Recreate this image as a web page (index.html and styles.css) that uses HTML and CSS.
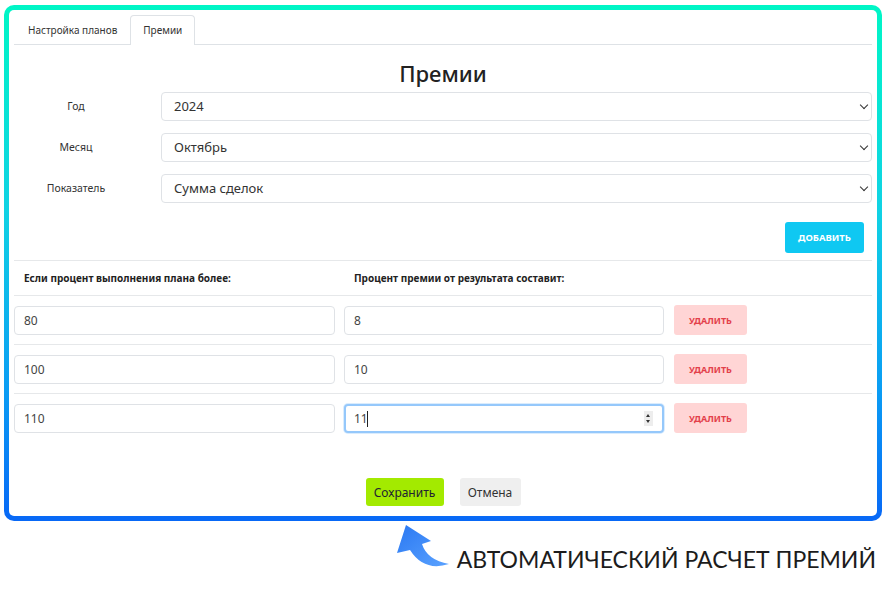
FILE: index.html
```html
<!DOCTYPE html>
<html lang="ru">
<head>
  <meta charset="UTF-8">
  <title>Премии</title>
  <link rel="stylesheet" href="styles.css">
</head>
<body>
  <div class="frame">
    <div class="panel">
      <div class="tabs">
        <div class="tab">Настройка планов</div>
        <div class="tab active">Премии</div>
      </div>

      <h1 class="title">Премии</h1>

      <div class="form">
        <label class="form-label">Год</label>
        <div class="select">2024<span class="chevron"></span></div>
        <label class="form-label">Месяц</label>
        <div class="select">Октябрь<span class="chevron"></span></div>
        <label class="form-label">Показатель</label>
        <div class="select">Сумма сделок<span class="chevron"></span></div>
      </div>

      <div class="add-row">
        <button class="btn btn-add">ДОБАВИТЬ</button>
      </div>

      <div class="rules">
        <div class="rules-head">
          <div class="col">Если процент выполнения плана более:</div>
          <div class="col">Процент премии от результата составит:</div>
        </div>
        <div class="rule">
          <input class="field" type="text" value="80">
          <input class="field" type="text" value="8">
          <button class="btn btn-del">УДАЛИТЬ</button>
        </div>
        <div class="rule">
          <input class="field" type="text" value="100">
          <input class="field" type="text" value="10">
          <button class="btn btn-del">УДАЛИТЬ</button>
        </div>
        <div class="rule last">
          <input class="field" type="text" value="110">
          <div class="field-wrap">
            <input class="field focus" type="text" value="11">
            <span class="caret"></span>
            <span class="spin"><i class="up"></i><i class="down"></i></span>
          </div>
          <button class="btn btn-del">УДАЛИТЬ</button>
        </div>
      </div>

      <div class="actions">
        <button class="btn btn-save">Сохранить</button>
        <button class="btn btn-cancel">Отмена</button>
      </div>
    </div>
  </div>

  <div class="caption">
    <svg class="arrow" width="56" height="48" viewBox="0 0 56 48">
      <defs>
        <linearGradient id="arrowGrad" x1="0" y1="0" x2="1" y2="1">
          <stop offset="0" stop-color="#2a78f2"/>
          <stop offset="1" stop-color="#5aa2ff"/>
        </linearGradient>
      </defs>
      <path d="M11,2 L36,18 L27,21 Q32,37 54,41 Q29,49 15,27 L2,30 Z" fill="url(#arrowGrad)"/>
    </svg>
    <span class="caption-text">АВТОМАТИЧЕСКИЙ РАСЧЕТ ПРЕМИЙ</span>
  </div>
</body>
</html>
```

FILE: styles.css
```css
body {
  margin: 0;
  background: #fff;
  font-family: "Noto Sans", "Open Sans", sans-serif;
  color: #333;
}

.frame {
  margin: 5px 4px 0 4px;
  height: 516px;
  box-sizing: border-box;
  padding: 5px;
  border-radius: 10px;
  background: linear-gradient(180deg, #00f6c6 0%, #10d2e4 40%, #0a9cf4 75%, #0868f6 100%);
}

.panel {
  height: 100%;
  box-sizing: border-box;
  background: #fff;
  border-radius: 5px;
  padding: 5px 5px 10px 5px;
  display: flex;
  flex-direction: column;
}

/* tabs */
.tabs {
  display: flex;
  border-bottom: 1px solid #dee2e6;
  height: 29px;
}

.tab {
  font-size: 10px;
  padding: 0 12px 0 13px;
  line-height: 29px;
  color: #333;
  border: 1px solid transparent;
  border-bottom: none;
  border-radius: 4px 4px 0 0;
  margin-bottom: -1px;
}

.tab.active {
  border-color: #dee2e6;
  background: #fff;
  height: 30px;
  box-sizing: border-box;
  padding: 0 12px;
}

.title {
  margin: 0;
  height: 47px;
  line-height: 56px;
  text-align: center;
  font-size: 22px;
  font-weight: 500;
  color: #222;
}

/* form */
.form {
  display: grid;
  grid-template-columns: 124px 1fr;
  column-gap: 23px;
  row-gap: 12px;
  align-items: center;
}

.form-label {
  font-size: 10.5px;
  text-align: center;
  color: #333;
  margin-top: -2px;
}

.select {
  position: relative;
  height: 29px;
  box-sizing: border-box;
  border: 1px solid #dfe2e6;
  border-radius: 4px;
  padding-left: 12px;
  font-size: 13px;
  line-height: 27px;
  color: #333;
}

.chevron {
  position: absolute;
  right: 4px;
  top: 9px;
  width: 5px;
  height: 5px;
  border-right: 1.5px solid #333;
  border-bottom: 1.5px solid #333;
  transform: rotate(45deg);
}

.add-row {
  display: flex;
  justify-content: flex-end;
  padding: 19px 8px 7px 0;
  border-bottom: 1px solid #e6e8ea;
}

/* buttons */
.btn {
  font-family: "Noto Sans", "Open Sans", sans-serif;
  border: none;
  border-radius: 3px;
  cursor: pointer;
}

.btn-add {
  width: 79px;
  height: 31px;
  background: #0fc8f2;
  color: #fff;
  font-size: 9.5px;
  font-weight: 700;
}

.btn-del {
  width: 73px;
  height: 30px;
  background: #ffd5d5;
  color: #e3404a;
  font-size: 9px;
  font-weight: 700;
}

.btn-save {
  width: 78px;
  height: 28px;
  background: #a3ea00;
  color: #223;
  font-size: 12px;
}

.btn-cancel {
  width: 61px;
  height: 28px;
  background: #efefef;
  color: #333;
  font-size: 12px;
}

/* rules table */
.rules-head {
  display: grid;
  grid-template-columns: 321px 320px;
  column-gap: 9px;
  height: 34px;
  align-items: center;
  border-bottom: 1px solid #e6e8ea;
  font-size: 10px;
  font-weight: 700;
  color: #222;
}

.rules-head .col {
  padding-left: 10px;
}

.rule {
  display: grid;
  grid-template-columns: 321px 320px 73px;
  column-gap: 9px;
  align-items: center;
  padding: 9px 0 9px 0;
  border-bottom: 1px solid #e6e8ea;
}

.rule .btn-del {
  margin-left: 1px;
}

.rule.last {
  border-bottom: none;
}

.field {
  width: 100%;
  height: 29px;
  box-sizing: border-box;
  border: 1px solid #dfe2e6;
  border-radius: 4px;
  padding: 0 9px;
  font-family: "Noto Sans", "Open Sans", sans-serif;
  font-size: 12px;
  color: #444;
  outline: none;
}

.field-wrap {
  position: relative;
}

.field.focus {
  border: 2px solid #95c8fb;
  padding-left: 8px;
  box-shadow: 0 0 0 1px rgba(150, 200, 250, 0.35);
}

.caret {
  position: absolute;
  left: 23px;
  top: 7px;
  width: 1px;
  height: 16px;
  background: #222;
}

.spin {
  position: absolute;
  right: 11px;
  top: 7px;
  width: 9px;
  height: 15px;
  background: #ededed;
}

.spin i {
  position: absolute;
  left: 2px;
  width: 0;
  height: 0;
  border-left: 2.5px solid transparent;
  border-right: 2.5px solid transparent;
}

.spin .up {
  top: 3px;
  border-bottom: 3px solid #333;
}

.spin .down {
  bottom: 3px;
  border-top: 3px solid #333;
}

.actions {
  margin-top: auto;
  display: flex;
  justify-content: center;
  gap: 16px;
}

/* caption under the frame */
.caption {
  display: flex;
  align-items: flex-start;
  justify-content: flex-end;
  padding-right: 10px;
}

.arrow {
  margin-top: 2px;
  margin-right: 6px;
}

.caption-text {
  margin-top: 24px;
  font-family: Lato, "Noto Sans", sans-serif;
  font-size: 23px;
  color: #1c1c1c;
}
```
